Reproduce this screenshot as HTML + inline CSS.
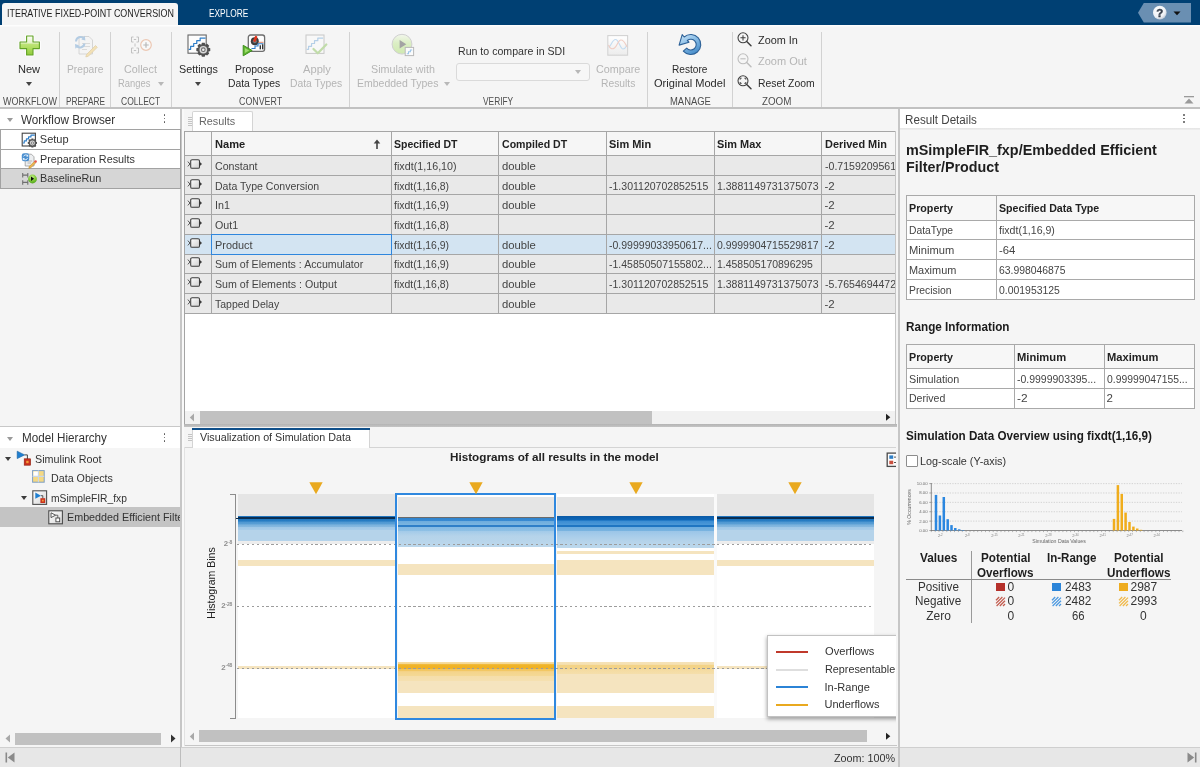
<!DOCTYPE html>
<html>
<head>
<meta charset="utf-8">
<title>Fixed-Point Tool</title>
<style>
*{box-sizing:border-box;margin:0;padding:0}
html,body{width:1200px;height:767px;overflow:hidden;background:#f5f5f5}
body{font-family:"Liberation Sans",sans-serif;font-size:12px;color:#333;position:relative}
.a{position:absolute}
.t{position:absolute;white-space:nowrap;transform-origin:0 50%}
.caret{position:absolute;width:0;height:0;border-left:3.5px solid transparent;border-right:3.5px solid transparent;border-top:4px solid #444}
.caret.d{border-top-color:#b8b8b8}
svg{position:absolute;overflow:visible}
#root{position:absolute;left:0;top:0;width:1200px;height:767px;overflow:hidden;will-change:transform;background:#f5f5f5}

</style>
</head>
<body>
<div id="root">
<div class="a" style="left:0px;top:0px;width:1200px;height:25px;background:#004073;"></div>
<div class="a" style="left:2px;top:3px;width:176px;height:23px;background:#f5f5f5;border-radius:3px 3px 0 0"></div>
<span class="t" style="left:6.5px;top:6px;font-size:10.5px;line-height:14px;color:#1f1f1f;transform:scaleX(0.851);">ITERATIVE FIXED-POINT CONVERSION</span>
<span class="t" style="left:208.5px;top:6px;font-size:10.5px;line-height:14px;color:#fff;transform:scaleX(0.794);">EXPLORE</span>
<svg style="left:1136px;top:2px" width="58" height="22" viewBox="1136 2 58 22"><polygon points="1138,12.7 1143.8,3 1191,3 1191,22.6 1143.8,22.6" fill="#6a8fb2"/><defs><radialGradient id="hg" cx="0.4" cy="0.35" r="0.7"><stop offset="0" stop-color="#fff"/><stop offset="0.7" stop-color="#eef1f5"/><stop offset="1" stop-color="#b9c4d2"/></radialGradient></defs><circle cx="1159.8" cy="12.6" r="6.8" fill="url(#hg)"/><text x="1159.8" y="16.7" font-family="Liberation Sans, sans-serif" font-weight="bold" font-size="11.5" text-anchor="middle" fill="#39424f" stroke="#39424f" stroke-width="0.4">?</text><polygon points="1173.5,11.5 1180.5,11.5 1177,15.3" fill="#111"/></svg>
<div class="a" style="left:0px;top:25px;width:1200px;height:82px;background:#f5f5f5;"></div>
<div class="a" style="left:0px;top:25px;width:1200px;height:1.3px;background:#fdfdfd;"></div>
<div class="a" style="left:0px;top:26.3px;width:1200px;height:0.8px;background:#f9f9f9;"></div>
<div class="a" style="left:59px;top:32px;width:1px;height:75px;background:#d2d2d2;"></div>
<div class="a" style="left:110px;top:32px;width:1px;height:75px;background:#d2d2d2;"></div>
<div class="a" style="left:171px;top:32px;width:1px;height:75px;background:#d2d2d2;"></div>
<div class="a" style="left:349px;top:32px;width:1px;height:75px;background:#d2d2d2;"></div>
<div class="a" style="left:647px;top:32px;width:1px;height:75px;background:#d2d2d2;"></div>
<div class="a" style="left:732px;top:32px;width:1px;height:75px;background:#d2d2d2;"></div>
<div class="a" style="left:821px;top:32px;width:1px;height:75px;background:#d2d2d2;"></div>
<span class="t" style="left:2.5px;top:95px;font-size:10px;line-height:13px;color:#4d4d4d;transform:scaleX(0.898);">WORKFLOW</span>
<span class="t" style="left:65.5px;top:95px;font-size:10px;line-height:13px;color:#4d4d4d;transform:scaleX(0.827);">PREPARE</span>
<span class="t" style="left:121.2px;top:95px;font-size:10px;line-height:13px;color:#4d4d4d;transform:scaleX(0.850);">COLLECT</span>
<span class="t" style="left:239.0px;top:95px;font-size:10px;line-height:13px;color:#4d4d4d;transform:scaleX(0.885);">CONVERT</span>
<span class="t" style="left:483.2px;top:95px;font-size:10px;line-height:13px;color:#4d4d4d;transform:scaleX(0.836);">VERIFY</span>
<span class="t" style="left:669.5px;top:95px;font-size:10px;line-height:13px;color:#4d4d4d;transform:scaleX(0.944);">MANAGE</span>
<span class="t" style="left:762.0px;top:95px;font-size:10px;line-height:13px;color:#4d4d4d;transform:scaleX(0.980);">ZOOM</span>
<span class="t" style="left:18.3px;top:62px;font-size:11.5px;line-height:15px;color:#2b2b2b;transform:scaleX(0.960);">New</span>
<div class="caret" style="left:26px;top:81.5px"></div>
<span class="t" style="left:67.0px;top:62px;font-size:11.5px;line-height:15px;color:#b5b5b5;transform:scaleX(0.889);">Prepare</span>
<span class="t" style="left:124.2px;top:62px;font-size:11.5px;line-height:15px;color:#b5b5b5;transform:scaleX(0.936);">Collect</span>
<span class="t" style="left:118.0px;top:76px;font-size:11.5px;line-height:15px;color:#b5b5b5;transform:scaleX(0.817);">Ranges</span>
<div class="caret d" style="left:158px;top:81.5px"></div>
<span class="t" style="left:178.5px;top:62px;font-size:11.5px;line-height:15px;color:#2b2b2b;transform:scaleX(0.936);">Settings</span>
<div class="caret" style="left:194.5px;top:81.5px"></div>
<span class="t" style="left:234.5px;top:62px;font-size:11.5px;line-height:15px;color:#2b2b2b;transform:scaleX(0.908);">Propose</span>
<span class="t" style="left:228.2px;top:76px;font-size:11.5px;line-height:15px;color:#2b2b2b;transform:scaleX(0.900);">Data Types</span>
<span class="t" style="left:302.5px;top:62px;font-size:11.5px;line-height:15px;color:#b5b5b5;transform:scaleX(0.969);">Apply</span>
<span class="t" style="left:290.2px;top:76px;font-size:11.5px;line-height:15px;color:#b5b5b5;transform:scaleX(0.900);">Data Types</span>
<span class="t" style="left:370.5px;top:62px;font-size:11.5px;line-height:15px;color:#b5b5b5;transform:scaleX(0.934);">Simulate with</span>
<span class="t" style="left:357.0px;top:76px;font-size:11.5px;line-height:15px;color:#b5b5b5;transform:scaleX(0.912);">Embedded Types</span>
<div class="caret d" style="left:443.5px;top:81.5px"></div>
<span class="t" style="left:458.2px;top:44px;font-size:11.5px;line-height:15px;color:#333;transform:scaleX(0.921);">Run to compare in SDI</span>
<div class="a" style="left:456px;top:62.5px;width:134px;height:18.5px;background:#f7f7f7;border:1px solid #dadada;border-radius:3px"></div>
<div class="caret d" style="left:574.5px;top:69.5px"></div>
<span class="t" style="left:595.5px;top:62px;font-size:11.5px;line-height:15px;color:#b5b5b5;transform:scaleX(0.938);">Compare</span>
<span class="t" style="left:600.5px;top:76px;font-size:11.5px;line-height:15px;color:#b5b5b5;transform:scaleX(0.897);">Results</span>
<span class="t" style="left:672.0px;top:62px;font-size:11.5px;line-height:15px;color:#2b2b2b;transform:scaleX(0.879);">Restore</span>
<span class="t" style="left:654.0px;top:76px;font-size:11.5px;line-height:15px;color:#2b2b2b;transform:scaleX(0.963);">Original Model</span>
<span class="t" style="left:757.5px;top:33px;font-size:11.5px;line-height:15px;color:#2b2b2b;transform:scaleX(0.946);">Zoom In</span>
<span class="t" style="left:757.5px;top:54px;font-size:11.5px;line-height:15px;color:#b5b5b5;transform:scaleX(0.956);">Zoom Out</span>
<span class="t" style="left:757.5px;top:76px;font-size:11.5px;line-height:15px;color:#2b2b2b;transform:scaleX(0.904);">Reset Zoom</span>
<svg style="left:1183px;top:95px" width="12" height="10" viewBox="0 0 12 10"><rect x="1" y="1" width="10" height="1.3" fill="#9a9a9a"/><polygon points="6,3.5 10.5,8.5 1.5,8.5" fill="#9a9a9a"/></svg>
<div class="a" style="left:0px;top:108px;width:180px;height:21px;background:#fff;"></div>
<div class="caret" style="left:7px;top:118px;border-top-color:#9a9a9a"></div>
<span class="t" style="left:21.2px;top:112px;font-size:12px;line-height:16px;color:#333;transform:scaleX(0.976);">Workflow Browser</span>
<div class="a" style="left:163.6px;top:114.2px;width:1.7px;height:1.7px;background:#555;border-radius:1px"></div>
<div class="a" style="left:163.6px;top:117.7px;width:1.7px;height:1.7px;background:#555;border-radius:1px"></div>
<div class="a" style="left:163.6px;top:121.2px;width:1.7px;height:1.7px;background:#555;border-radius:1px"></div>
<div class="a" style="left:180.2px;top:108px;width:1.5px;height:659px;background:#c6c6c6;"></div>
<div class="a" style="left:181.7px;top:108px;width:2.1px;height:639px;background:#f9f9f9;"></div>
<div class="a" style="left:0px;top:128.7px;width:181.3px;height:60.2px;background:#a2a2a2;"></div>
<div class="a" style="left:1px;top:130px;width:179px;height:18.6px;background:#fff;"></div>
<div class="a" style="left:1px;top:149.8px;width:179px;height:18.4px;background:#fff;"></div>
<div class="a" style="left:1px;top:169.4px;width:179px;height:18.4px;background:#d6d6d6;"></div>
<span class="t" style="left:39.8px;top:132px;font-size:11px;line-height:14px;color:#333;">Setup</span>
<span class="t" style="left:39.8px;top:152px;font-size:11px;line-height:14px;color:#333;transform:scaleX(0.982);">Preparation Results</span>
<span class="t" style="left:39.8px;top:171px;font-size:11px;line-height:14px;color:#333;transform:scaleX(0.984);">BaselineRun</span>
<div class="a" style="left:0px;top:425.8px;width:180px;height:1.7px;background:#c8c8c8;"></div>
<div class="a" style="left:0px;top:427px;width:180px;height:21px;background:#fff;"></div>
<div class="caret" style="left:7px;top:436.5px;border-top-color:#9a9a9a"></div>
<span class="t" style="left:21.5px;top:430px;font-size:12px;line-height:16px;color:#333;transform:scaleX(0.972);">Model Hierarchy</span>
<div class="a" style="left:163.6px;top:433.0px;width:1.7px;height:1.7px;background:#555;border-radius:1px"></div>
<div class="a" style="left:163.6px;top:436.5px;width:1.7px;height:1.7px;background:#555;border-radius:1px"></div>
<div class="a" style="left:163.6px;top:440.0px;width:1.7px;height:1.7px;background:#555;border-radius:1px"></div>
<div class="a" style="left:0px;top:507px;width:180px;height:19.7px;background:#c4c4c4;"></div>
<div class="caret" style="left:5px;top:456.5px;border-top-color:#3c3c3c"></div>
<div class="caret" style="left:20.5px;top:495.5px;border-top-color:#3c3c3c"></div>
<span class="t" style="left:34.5px;top:452px;font-size:11.5px;line-height:15px;color:#333;transform:scaleX(0.936);">Simulink Root</span>
<span class="t" style="left:50.5px;top:471px;font-size:11.5px;line-height:15px;color:#333;transform:scaleX(0.931);">Data Objects</span>
<span class="t" style="left:50.5px;top:491px;font-size:11.5px;line-height:15px;color:#333;transform:scaleX(0.893);">mSimpleFIR_fxp</span>
<div class="a" style="left:67px;top:507px;width:113px;height:20px;overflow:hidden"><span class="t" style="left:-0.5px;top:3px;font-size:11.5px;line-height:15px;color:#333;transform:scaleX(0.935);">Embedded Efficient Filter</span></div>
<div class="a" style="left:15px;top:732.5px;width:146px;height:12px;background:#c1c1c1;"></div>
<svg style="left:5px;top:734px" width="6" height="9" viewBox="0 0 6 9"><polygon points="5,0.5 5,8.5 0.5,4.5" fill="#a8a8a8"/></svg>
<svg style="left:170px;top:734px" width="6" height="9" viewBox="0 0 6 9"><polygon points="1,0.5 1,8.5 5.5,4.5" fill="#333"/></svg>
<div class="a" style="left:0px;top:747px;width:1200px;height:20px;background:#e7e7e7;"></div>
<div class="a" style="left:0px;top:746.5px;width:1200px;height:1px;background:#cfcfcf;"></div>
<div class="a" style="left:180px;top:747px;width:1px;height:20px;background:#bdbdbd;"></div>
<svg style="left:5px;top:752px" width="10" height="11" viewBox="0 0 10 11"><rect x="0.5" y="0.5" width="1.6" height="10" fill="#8a8a8a"/><polygon points="9.5,0.5 9.5,10.5 2.8,5.5" fill="#8a8a8a"/></svg>
<svg style="left:1186.5px;top:752px" width="10" height="11" viewBox="0 0 10 11"><rect x="7.9" y="0.5" width="1.6" height="10" fill="#8a8a8a"/><polygon points="0.5,0.5 0.5,10.5 7.2,5.5" fill="#8a8a8a"/></svg>
<span class="t" style="left:834.2px;top:751px;font-size:11.5px;line-height:15px;color:#333;transform:scaleX(0.939);">Zoom: 100%</span>
<div class="a" style="left:185px;top:108px;width:711px;height:317px;background:#f5f5f5;"></div>
<div class="a" style="left:185px;top:131px;width:711px;height:294px;background:#fff;"></div>
<div class="a" style="left:183.7px;top:131px;width:1.3px;height:294px;background:#a4a4a4;"></div>
<div class="a" style="left:184px;top:424.3px;width:712.5px;height:3px;background:linear-gradient(#b4b4b4,#c4c4c4);"></div>
<div class="a" style="left:192px;top:111px;width:61px;height:21px;background:#fff;border:1px solid #d4d4d4;border-bottom:0;border-radius:2px 2px 0 0"></div>
<span class="t" style="left:199.3px;top:114px;font-size:11px;line-height:14px;color:#666;transform:scaleX(0.984);">Results</span>
<div class="a" style="left:188.3px;top:117px;width:3.4px;height:1px;background:#c4c4c4;"></div>
<div class="a" style="left:188.3px;top:119px;width:3.4px;height:1px;background:#c4c4c4;"></div>
<div class="a" style="left:188.3px;top:121px;width:3.4px;height:1px;background:#c4c4c4;"></div>
<div class="a" style="left:188.3px;top:123px;width:3.4px;height:1px;background:#c4c4c4;"></div>
<div class="a" style="left:188.3px;top:125px;width:3.4px;height:1px;background:#c4c4c4;"></div>
<div class="a" style="left:185px;top:131px;width:711px;height:183px;background:#a6a6a6;"></div>
<div class="a" style="left:185px;top:132px;width:26px;height:23px;background:#f6f6f6;"></div>
<div class="a" style="left:212px;top:132px;width:179px;height:23px;background:#f6f6f6;"></div>
<div class="a" style="left:392px;top:132px;width:106px;height:23px;background:#f6f6f6;"></div>
<div class="a" style="left:499px;top:132px;width:107px;height:23px;background:#f6f6f6;"></div>
<div class="a" style="left:607px;top:132px;width:107px;height:23px;background:#f6f6f6;"></div>
<div class="a" style="left:715px;top:132px;width:106px;height:23px;background:#f6f6f6;"></div>
<div class="a" style="left:822px;top:132px;width:74px;height:23px;background:#f6f6f6;"></div>
<div class="a" style="left:185px;top:156px;width:26px;height:19px;background:#e9e9e9;"></div>
<div class="a" style="left:212px;top:156px;width:179px;height:19px;background:#e9e9e9;"></div>
<div class="a" style="left:392px;top:156px;width:106px;height:19px;background:#e9e9e9;"></div>
<div class="a" style="left:499px;top:156px;width:107px;height:19px;background:#e9e9e9;"></div>
<div class="a" style="left:607px;top:156px;width:107px;height:19px;background:#e9e9e9;"></div>
<div class="a" style="left:715px;top:156px;width:106px;height:19px;background:#e9e9e9;"></div>
<div class="a" style="left:822px;top:156px;width:74px;height:19px;background:#e9e9e9;"></div>
<div class="a" style="left:185px;top:176px;width:26px;height:18px;background:#e9e9e9;"></div>
<div class="a" style="left:212px;top:176px;width:179px;height:18px;background:#e9e9e9;"></div>
<div class="a" style="left:392px;top:176px;width:106px;height:18px;background:#e9e9e9;"></div>
<div class="a" style="left:499px;top:176px;width:107px;height:18px;background:#e9e9e9;"></div>
<div class="a" style="left:607px;top:176px;width:107px;height:18px;background:#e9e9e9;"></div>
<div class="a" style="left:715px;top:176px;width:106px;height:18px;background:#e9e9e9;"></div>
<div class="a" style="left:822px;top:176px;width:74px;height:18px;background:#e9e9e9;"></div>
<div class="a" style="left:185px;top:195px;width:26px;height:19px;background:#e9e9e9;"></div>
<div class="a" style="left:212px;top:195px;width:179px;height:19px;background:#e9e9e9;"></div>
<div class="a" style="left:392px;top:195px;width:106px;height:19px;background:#e9e9e9;"></div>
<div class="a" style="left:499px;top:195px;width:107px;height:19px;background:#e9e9e9;"></div>
<div class="a" style="left:607px;top:195px;width:107px;height:19px;background:#e9e9e9;"></div>
<div class="a" style="left:715px;top:195px;width:106px;height:19px;background:#e9e9e9;"></div>
<div class="a" style="left:822px;top:195px;width:74px;height:19px;background:#e9e9e9;"></div>
<div class="a" style="left:185px;top:215px;width:26px;height:19px;background:#e9e9e9;"></div>
<div class="a" style="left:212px;top:215px;width:179px;height:19px;background:#e9e9e9;"></div>
<div class="a" style="left:392px;top:215px;width:106px;height:19px;background:#e9e9e9;"></div>
<div class="a" style="left:499px;top:215px;width:107px;height:19px;background:#e9e9e9;"></div>
<div class="a" style="left:607px;top:215px;width:107px;height:19px;background:#e9e9e9;"></div>
<div class="a" style="left:715px;top:215px;width:106px;height:19px;background:#e9e9e9;"></div>
<div class="a" style="left:822px;top:215px;width:74px;height:19px;background:#e9e9e9;"></div>
<div class="a" style="left:185px;top:235px;width:26px;height:19px;background:#d3e4f2;"></div>
<div class="a" style="left:212px;top:235px;width:179px;height:19px;background:#d3e4f2;"></div>
<div class="a" style="left:392px;top:235px;width:106px;height:19px;background:#d3e4f2;"></div>
<div class="a" style="left:499px;top:235px;width:107px;height:19px;background:#d3e4f2;"></div>
<div class="a" style="left:607px;top:235px;width:107px;height:19px;background:#d3e4f2;"></div>
<div class="a" style="left:715px;top:235px;width:106px;height:19px;background:#d3e4f2;"></div>
<div class="a" style="left:822px;top:235px;width:74px;height:19px;background:#d3e4f2;"></div>
<div class="a" style="left:185px;top:255px;width:26px;height:18px;background:#e9e9e9;"></div>
<div class="a" style="left:212px;top:255px;width:179px;height:18px;background:#e9e9e9;"></div>
<div class="a" style="left:392px;top:255px;width:106px;height:18px;background:#e9e9e9;"></div>
<div class="a" style="left:499px;top:255px;width:107px;height:18px;background:#e9e9e9;"></div>
<div class="a" style="left:607px;top:255px;width:107px;height:18px;background:#e9e9e9;"></div>
<div class="a" style="left:715px;top:255px;width:106px;height:18px;background:#e9e9e9;"></div>
<div class="a" style="left:822px;top:255px;width:74px;height:18px;background:#e9e9e9;"></div>
<div class="a" style="left:185px;top:274px;width:26px;height:19px;background:#e9e9e9;"></div>
<div class="a" style="left:212px;top:274px;width:179px;height:19px;background:#e9e9e9;"></div>
<div class="a" style="left:392px;top:274px;width:106px;height:19px;background:#e9e9e9;"></div>
<div class="a" style="left:499px;top:274px;width:107px;height:19px;background:#e9e9e9;"></div>
<div class="a" style="left:607px;top:274px;width:107px;height:19px;background:#e9e9e9;"></div>
<div class="a" style="left:715px;top:274px;width:106px;height:19px;background:#e9e9e9;"></div>
<div class="a" style="left:822px;top:274px;width:74px;height:19px;background:#e9e9e9;"></div>
<div class="a" style="left:185px;top:294px;width:26px;height:19px;background:#e9e9e9;"></div>
<div class="a" style="left:212px;top:294px;width:179px;height:19px;background:#e9e9e9;"></div>
<div class="a" style="left:392px;top:294px;width:106px;height:19px;background:#e9e9e9;"></div>
<div class="a" style="left:499px;top:294px;width:107px;height:19px;background:#e9e9e9;"></div>
<div class="a" style="left:607px;top:294px;width:107px;height:19px;background:#e9e9e9;"></div>
<div class="a" style="left:715px;top:294px;width:106px;height:19px;background:#e9e9e9;"></div>
<div class="a" style="left:822px;top:294px;width:74px;height:19px;background:#e9e9e9;"></div>
<div class="a" style="left:211px;top:233.6px;width:181.4px;height:21.8px;background:#d3e4f2;border:1.8px solid #2f86dd"></div>
<span class="t" style="left:214.5px;top:137px;font-size:11.5px;line-height:15px;color:#222;font-weight:700;transform:scaleX(0.964);">Name</span>
<span class="t" style="left:394.1px;top:137px;font-size:11.5px;line-height:15px;color:#222;font-weight:700;transform:scaleX(0.912);">Specified DT</span>
<span class="t" style="left:501.5px;top:137px;font-size:11.5px;line-height:15px;color:#222;font-weight:700;transform:scaleX(0.919);">Compiled DT</span>
<span class="t" style="left:609.1px;top:137px;font-size:11.5px;line-height:15px;color:#222;font-weight:700;transform:scaleX(0.955);">Sim Min</span>
<span class="t" style="left:716.5px;top:137px;font-size:11.5px;line-height:15px;color:#222;font-weight:700;transform:scaleX(0.949);">Sim Max</span>
<span class="t" style="left:824.5px;top:137px;font-size:11.5px;line-height:15px;color:#222;font-weight:700;transform:scaleX(0.950);">Derived Min</span>
<svg style="left:372.5px;top:139px" width="8" height="11" viewBox="0 0 8 11"><path d="M4 0.6 L7.3 4.6 H4.8 V10 H3.2 V4.6 H0.7 Z" fill="#444"/></svg>
<span class="t" style="left:214.5px;top:159px;font-size:11.5px;line-height:15px;color:#444;transform:scaleX(0.925);">Constant</span>
<span class="t" style="left:394.1px;top:159px;font-size:11.5px;line-height:15px;color:#444;transform:scaleX(0.933);">fixdt(1,16,10)</span>
<span class="t" style="left:501.5px;top:159px;font-size:11.5px;line-height:15px;color:#444;transform:scaleX(0.981);">double</span>
<div class="a" style="left:825px;top:157.3px;width:70.5px;height:18px;overflow:hidden"><span class="t" style="left:-0.5px;top:2px;font-size:11.5px;line-height:15px;color:#444;transform:scaleX(0.919);">-0.7159209561</span></div>
<svg style="left:187px;top:158.2px" width="16" height="12" viewBox="0 0 16 12"><defs><linearGradient id="bg0" x1="0" y1="0" x2="1" y2="1"><stop offset="0" stop-color="#fff"/><stop offset="1" stop-color="#cfcfcf"/></linearGradient></defs><rect x="3.7" y="1.7" width="8.8" height="8.6" rx="1.4" fill="url(#bg0)" stroke="#3c3c3c" stroke-width="1.05"/><path d="M0.9 3.6 L2.9 6 L0.9 8.4" fill="none" stroke="#444" stroke-width="0.9"/><polygon points="12.9,3.9 15,6 12.9,8.1" fill="#3c3c3c"/></svg>
<span class="t" style="left:214.5px;top:179px;font-size:11.5px;line-height:15px;color:#444;transform:scaleX(0.917);">Data Type Conversion</span>
<span class="t" style="left:394.1px;top:179px;font-size:11.5px;line-height:15px;color:#444;transform:scaleX(0.907);">fixdt(1,16,8)</span>
<span class="t" style="left:501.5px;top:179px;font-size:11.5px;line-height:15px;color:#444;transform:scaleX(0.981);">double</span>
<span class="t" style="left:609.1px;top:179px;font-size:11.5px;line-height:15px;color:#444;transform:scaleX(0.915);">-1.301120702852515</span>
<span class="t" style="left:716.5px;top:179px;font-size:11.5px;line-height:15px;color:#444;transform:scaleX(0.914);">1.3881149731375073</span>
<span class="t" style="left:824.5px;top:179px;font-size:11.5px;line-height:15px;color:#444;">-2</span>
<svg style="left:187px;top:177.8px" width="16" height="12" viewBox="0 0 16 12"><defs><linearGradient id="bg1" x1="0" y1="0" x2="1" y2="1"><stop offset="0" stop-color="#fff"/><stop offset="1" stop-color="#cfcfcf"/></linearGradient></defs><rect x="3.7" y="1.7" width="8.8" height="8.6" rx="1.4" fill="url(#bg1)" stroke="#3c3c3c" stroke-width="1.05"/><path d="M0.9 3.6 L2.9 6 L0.9 8.4" fill="none" stroke="#444" stroke-width="0.9"/><polygon points="12.9,3.9 15,6 12.9,8.1" fill="#3c3c3c"/></svg>
<span class="t" style="left:214.5px;top:198px;font-size:11.5px;line-height:15px;color:#444;transform:scaleX(0.931);">In1</span>
<span class="t" style="left:394.1px;top:198px;font-size:11.5px;line-height:15px;color:#444;transform:scaleX(0.907);">fixdt(1,16,9)</span>
<span class="t" style="left:501.5px;top:198px;font-size:11.5px;line-height:15px;color:#444;transform:scaleX(0.981);">double</span>
<span class="t" style="left:824.5px;top:198px;font-size:11.5px;line-height:15px;color:#444;">-2</span>
<svg style="left:187px;top:197.3px" width="16" height="12" viewBox="0 0 16 12"><defs><linearGradient id="bg2" x1="0" y1="0" x2="1" y2="1"><stop offset="0" stop-color="#fff"/><stop offset="1" stop-color="#cfcfcf"/></linearGradient></defs><rect x="3.7" y="1.7" width="8.8" height="8.6" rx="1.4" fill="url(#bg2)" stroke="#3c3c3c" stroke-width="1.05"/><path d="M0.9 3.6 L2.9 6 L0.9 8.4" fill="none" stroke="#444" stroke-width="0.9"/><polygon points="12.9,3.9 15,6 12.9,8.1" fill="#3c3c3c"/></svg>
<span class="t" style="left:214.5px;top:218px;font-size:11.5px;line-height:15px;color:#444;transform:scaleX(0.930);">Out1</span>
<span class="t" style="left:394.1px;top:218px;font-size:11.5px;line-height:15px;color:#444;transform:scaleX(0.907);">fixdt(1,16,8)</span>
<span class="t" style="left:824.5px;top:218px;font-size:11.5px;line-height:15px;color:#444;">-2</span>
<svg style="left:187px;top:216.9px" width="16" height="12" viewBox="0 0 16 12"><defs><linearGradient id="bg3" x1="0" y1="0" x2="1" y2="1"><stop offset="0" stop-color="#fff"/><stop offset="1" stop-color="#cfcfcf"/></linearGradient></defs><rect x="3.7" y="1.7" width="8.8" height="8.6" rx="1.4" fill="url(#bg3)" stroke="#3c3c3c" stroke-width="1.05"/><path d="M0.9 3.6 L2.9 6 L0.9 8.4" fill="none" stroke="#444" stroke-width="0.9"/><polygon points="12.9,3.9 15,6 12.9,8.1" fill="#3c3c3c"/></svg>
<span class="t" style="left:214.5px;top:238px;font-size:11.5px;line-height:15px;color:#444;transform:scaleX(0.949);">Product</span>
<span class="t" style="left:394.1px;top:238px;font-size:11.5px;line-height:15px;color:#444;transform:scaleX(0.907);">fixdt(1,16,9)</span>
<span class="t" style="left:501.5px;top:238px;font-size:11.5px;line-height:15px;color:#444;transform:scaleX(0.981);">double</span>
<span class="t" style="left:609.1px;top:238px;font-size:11.5px;line-height:15px;color:#444;transform:scaleX(0.914);">-0.99999033950617...</span>
<span class="t" style="left:716.5px;top:238px;font-size:11.5px;line-height:15px;color:#444;transform:scaleX(0.907);">0.9999904715529817</span>
<span class="t" style="left:824.5px;top:238px;font-size:11.5px;line-height:15px;color:#444;">-2</span>
<svg style="left:187px;top:236.5px" width="16" height="12" viewBox="0 0 16 12"><defs><linearGradient id="bg4" x1="0" y1="0" x2="1" y2="1"><stop offset="0" stop-color="#fff"/><stop offset="1" stop-color="#cfcfcf"/></linearGradient></defs><rect x="3.7" y="1.7" width="8.8" height="8.6" rx="1.4" fill="url(#bg4)" stroke="#3c3c3c" stroke-width="1.05"/><path d="M0.9 3.6 L2.9 6 L0.9 8.4" fill="none" stroke="#444" stroke-width="0.9"/><polygon points="12.9,3.9 15,6 12.9,8.1" fill="#3c3c3c"/></svg>
<span class="t" style="left:214.5px;top:257px;font-size:11.5px;line-height:15px;color:#444;transform:scaleX(0.924);">Sum of Elements : Accumulator</span>
<span class="t" style="left:394.1px;top:257px;font-size:11.5px;line-height:15px;color:#444;transform:scaleX(0.907);">fixdt(1,16,9)</span>
<span class="t" style="left:501.5px;top:257px;font-size:11.5px;line-height:15px;color:#444;transform:scaleX(0.981);">double</span>
<span class="t" style="left:609.1px;top:257px;font-size:11.5px;line-height:15px;color:#444;transform:scaleX(0.914);">-1.45850507155802...</span>
<span class="t" style="left:716.5px;top:257px;font-size:11.5px;line-height:15px;color:#444;transform:scaleX(0.909);">1.458505170896295</span>
<svg style="left:187px;top:256.0px" width="16" height="12" viewBox="0 0 16 12"><defs><linearGradient id="bg5" x1="0" y1="0" x2="1" y2="1"><stop offset="0" stop-color="#fff"/><stop offset="1" stop-color="#cfcfcf"/></linearGradient></defs><rect x="3.7" y="1.7" width="8.8" height="8.6" rx="1.4" fill="url(#bg5)" stroke="#3c3c3c" stroke-width="1.05"/><path d="M0.9 3.6 L2.9 6 L0.9 8.4" fill="none" stroke="#444" stroke-width="0.9"/><polygon points="12.9,3.9 15,6 12.9,8.1" fill="#3c3c3c"/></svg>
<span class="t" style="left:214.5px;top:277px;font-size:11.5px;line-height:15px;color:#444;transform:scaleX(0.926);">Sum of Elements : Output</span>
<span class="t" style="left:394.1px;top:277px;font-size:11.5px;line-height:15px;color:#444;transform:scaleX(0.907);">fixdt(1,16,8)</span>
<span class="t" style="left:501.5px;top:277px;font-size:11.5px;line-height:15px;color:#444;transform:scaleX(0.981);">double</span>
<span class="t" style="left:609.1px;top:277px;font-size:11.5px;line-height:15px;color:#444;transform:scaleX(0.915);">-1.301120702852515</span>
<span class="t" style="left:716.5px;top:277px;font-size:11.5px;line-height:15px;color:#444;transform:scaleX(0.914);">1.3881149731375073</span>
<div class="a" style="left:825px;top:274.9px;width:70.5px;height:18px;overflow:hidden"><span class="t" style="left:-0.5px;top:2px;font-size:11.5px;line-height:15px;color:#444;transform:scaleX(0.919);">-5.7654694472</span></div>
<svg style="left:187px;top:275.8px" width="16" height="12" viewBox="0 0 16 12"><defs><linearGradient id="bg6" x1="0" y1="0" x2="1" y2="1"><stop offset="0" stop-color="#fff"/><stop offset="1" stop-color="#cfcfcf"/></linearGradient></defs><rect x="3.7" y="1.7" width="8.8" height="8.6" rx="1.4" fill="url(#bg6)" stroke="#3c3c3c" stroke-width="1.05"/><path d="M0.9 3.6 L2.9 6 L0.9 8.4" fill="none" stroke="#444" stroke-width="0.9"/><polygon points="12.9,3.9 15,6 12.9,8.1" fill="#3c3c3c"/></svg>
<span class="t" style="left:214.5px;top:297px;font-size:11.5px;line-height:15px;color:#444;transform:scaleX(0.913);">Tapped Delay</span>
<span class="t" style="left:501.5px;top:297px;font-size:11.5px;line-height:15px;color:#444;transform:scaleX(0.981);">double</span>
<span class="t" style="left:824.5px;top:297px;font-size:11.5px;line-height:15px;color:#444;">-2</span>
<svg style="left:187px;top:295.9px" width="16" height="12" viewBox="0 0 16 12"><defs><linearGradient id="bg7" x1="0" y1="0" x2="1" y2="1"><stop offset="0" stop-color="#fff"/><stop offset="1" stop-color="#cfcfcf"/></linearGradient></defs><rect x="3.7" y="1.7" width="8.8" height="8.6" rx="1.4" fill="url(#bg7)" stroke="#3c3c3c" stroke-width="1.05"/><path d="M0.9 3.6 L2.9 6 L0.9 8.4" fill="none" stroke="#444" stroke-width="0.9"/><polygon points="12.9,3.9 15,6 12.9,8.1" fill="#3c3c3c"/></svg>
<div class="a" style="left:185px;top:411px;width:711px;height:13px;background:#f1f1f1;"></div>
<div class="a" style="left:200px;top:411px;width:452px;height:12.5px;background:#c1c1c1;"></div>
<svg style="left:189px;top:413px" width="6" height="9" viewBox="0 0 6 9"><polygon points="5,0.5 5,8.5 0.8,4.5" fill="#a8a8a8"/></svg>
<svg style="left:885.4px;top:413.3px" width="6" height="9" viewBox="0 0 6 9"><polygon points="1,0.8 1,7.8 5.3,4.3" fill="#222"/></svg>
<div class="a" style="left:895.3px;top:131px;width:1.2px;height:294px;background:#c6c6c6;"></div>
<div class="a" style="left:184px;top:424.3px;width:712.5px;height:3px;background:linear-gradient(#b4b4b4,#c4c4c4);"></div>
<div class="a" style="left:185px;top:427px;width:711px;height:319px;background:#f5f5f5;"></div>
<div class="a" style="left:183.5px;top:447px;width:1.5px;height:299px;background:#e2e2e2;"></div>
<div class="a" style="left:185px;top:447px;width:711px;height:1px;background:#d4d4d4;"></div>
<div class="a" style="left:185px;top:744.5px;width:712px;height:1px;background:#c6c6c6;"></div>
<div class="a" style="left:192px;top:427.5px;width:177.5px;height:20.5px;background:#fff;border-right:1px solid #d4d4d4;border-left:1px solid #d4d4d4"></div>
<div class="a" style="left:192px;top:427.5px;width:177.5px;height:2px;background:#0f4f8a;"></div>
<div class="a" style="left:188.3px;top:434px;width:3.4px;height:1px;background:#c4c4c4;"></div>
<div class="a" style="left:188.3px;top:436px;width:3.4px;height:1px;background:#c4c4c4;"></div>
<div class="a" style="left:188.3px;top:438px;width:3.4px;height:1px;background:#c4c4c4;"></div>
<div class="a" style="left:188.3px;top:440px;width:3.4px;height:1px;background:#c4c4c4;"></div>
<span class="t" style="left:199.5px;top:430px;font-size:11px;line-height:14px;color:#333;transform:scaleX(0.977);">Visualization of Simulation Data</span>
<span class="t" style="left:449.5px;top:450px;font-size:11.5px;line-height:15px;color:#222;font-weight:700;transform:scaleX(1.018);">Histograms of all results in the model</span>
<div class="a" style="left:185px;top:448px;width:711px;height:296px;overflow:hidden">
<div class="a" style="left:52.6px;top:46.3px;width:157.0px;height:223.3px;background:#fff;"></div>
<div class="a" style="left:52.6px;top:46.3px;width:157.0px;height:22.0px;background:#e5e5e5;"></div>
<div class="a" style="left:52.6px;top:68.3px;width:157.0px;height:24.5px;background:linear-gradient(#2277c0 0,#1f74be 1px,#0a2e52 1.5px,#0a2e52 2.8px,#1f77c0 3.3px,#2a7ec4 5.3px,#4d96d1 5.8px,#5a9fd5 8.2px,#79b1dd 8.7px,#85b8e0 10.8px,#a0c8e8 11.3px,#a8cce9 13.8px,#b5d3ea 14.5px,#b5d3ea 100%);"></div>
<div class="a" style="left:52.6px;top:92.8px;width:157.0px;height:3.5px;background:#ededed;"></div>
<div class="a" style="left:52.6px;top:111.6px;width:157.0px;height:6.2px;background:#f5e4bf;"></div>
<div class="a" style="left:52.6px;top:217.6px;width:157.0px;height:3.2px;background:#f5e4bf;"></div>
<div class="a" style="left:50.4px;top:69.6px;width:2.4px;height:1.5px;background:#0a2e52;"></div>
<div class="a" style="left:212.5px;top:46.3px;width:156.5px;height:223.3px;background:#fff;"></div>
<div class="a" style="left:212.5px;top:49.2px;width:156.5px;height:20.3px;background:#e5e5e5;"></div>
<div class="a" style="left:212.5px;top:69.3px;width:156.5px;height:30.2px;background:linear-gradient(#6b6b6b 0,#6b6b6b 1.2px,#2f84cf 1.3px,#3a8bd2 4px,#6fadde 4.5px,#7ab4e0 7.5px,#2f7fc8 8px,#2f7fc8 10px,#86bbe4 10.5px,#8fc0e5 14px,#a4cbe9 14.5px,#b5d3ea 19px,#bcd8ec 100%);"></div>
<div class="a" style="left:212.5px;top:115.5px;width:156.5px;height:11.2px;background:#f5e4bf;"></div>
<div class="a" style="left:212.5px;top:214.3px;width:156.5px;height:30.9px;background:linear-gradient(#f6dea6 0,#f5d68f 2px,#f0b52b 2.6px,#efb021 6.4px,#f2c45c 7px,#f2c866 9px,#f4d48b 9.6px,#f4d894 13.5px,#f5deaa 14.2px,#f5e0b0 18.5px,#f5e4bf 19.2px,#f5e4bf 100%);"></div>
<div class="a" style="left:212.5px;top:258.2px;width:156.5px;height:11.4px;background:#f5e4bf;"></div>
<div class="a" style="left:371.6px;top:45.6px;width:157.3px;height:224.0px;background:#fff;"></div>
<div class="a" style="left:371.6px;top:49.0px;width:157.3px;height:19.4px;background:#e5e5e5;"></div>
<div class="a" style="left:371.6px;top:68.3px;width:157.3px;height:31.7px;background:linear-gradient(#0a5aa6 0,#0c66b8 4px,#3a8cd3 5px,#4a97d7 8.5px,#1f75c2 9px,#1f75c2 10.5px,#6dacdf 11px,#7ab4e0 15px,#9cc6e8 15.5px,#a8cdea 20px,#b5d3ea 25px,#bcd8ec 100%);"></div>
<div class="a" style="left:371.6px;top:102.8px;width:157.3px;height:3.0px;background:#f5e4bf;"></div>
<div class="a" style="left:371.6px;top:112.0px;width:157.3px;height:15.0px;background:#f5e4bf;"></div>
<div class="a" style="left:371.6px;top:214.3px;width:157.3px;height:30.9px;background:linear-gradient(#f5e2b8 0,#f5e0b2 2.4px,#f3d387 3px,#f3d387 7px,#f4dba0 7.6px,#f5deaa 11.5px,#f5e4bf 12.2px,#f5e4bf 100%);"></div>
<div class="a" style="left:371.6px;top:258.2px;width:157.3px;height:11.4px;background:#f5e4bf;"></div>
<div class="a" style="left:528.9px;top:45.6px;width:3.2px;height:224.0px;background:#fafafa;"></div>
<div class="a" style="left:532.1px;top:46.3px;width:156.5px;height:223.3px;background:#fff;"></div>
<div class="a" style="left:532.1px;top:46.3px;width:156.5px;height:22.0px;background:#e5e5e5;"></div>
<div class="a" style="left:532.1px;top:68.3px;width:156.5px;height:24.5px;background:linear-gradient(#2277c0 0,#1f74be 1px,#0a2e52 1.5px,#0a2e52 2.8px,#1f77c0 3.3px,#2a7ec4 5.3px,#4d96d1 5.8px,#5a9fd5 8.2px,#79b1dd 8.7px,#85b8e0 10.8px,#a0c8e8 11.3px,#a8cce9 13.8px,#b5d3ea 14.5px,#b5d3ea 100%);"></div>
<div class="a" style="left:532.1px;top:92.8px;width:156.5px;height:3.5px;background:#ededed;"></div>
<div class="a" style="left:532.1px;top:111.6px;width:156.5px;height:6.2px;background:#f5e4bf;"></div>
<div class="a" style="left:532.1px;top:217.6px;width:156.5px;height:3.2px;background:#f5e4bf;"></div>
<div class="a" style="left:51.5px;top:96.1px;width:637.0px;height:1.1px;background:repeating-linear-gradient(90deg,#9c9c9c 0,#9c9c9c 2.2px,transparent 2.2px,transparent 4.9px);"></div>
<div class="a" style="left:51.5px;top:158.2px;width:637.0px;height:1.1px;background:repeating-linear-gradient(90deg,#9c9c9c 0,#9c9c9c 2.2px,transparent 2.2px,transparent 4.9px);"></div>
<div class="a" style="left:51.5px;top:219.9px;width:637.0px;height:1.1px;background:repeating-linear-gradient(90deg,#9c9c9c 0,#9c9c9c 2.2px,transparent 2.2px,transparent 4.9px);"></div>
<div class="a" style="left:210.2px;top:44.8px;width:160.6px;height:226.8px;background:transparent;border:2px solid #2f88df"></div>
<div class="a" style="left:50.2px;top:46.2px;width:1.0px;height:224.6px;background:#8c8c8c;"></div>
<div class="a" style="left:44.8px;top:46.0px;width:6.0px;height:1.0px;background:#8c8c8c;"></div>
<div class="a" style="left:44.8px;top:270.0px;width:6.0px;height:1.0px;background:#8c8c8c;"></div>
<svg style="left:124.0px;top:33.8px" width="14" height="12.4" viewBox="0 0 14 12.4"><polygon points="0.3,0.2 13.7,0.2 7,12.2" fill="#e9a91f"/></svg>
<svg style="left:283.7px;top:33.8px" width="14" height="12.4" viewBox="0 0 14 12.4"><polygon points="0.3,0.2 13.7,0.2 7,12.2" fill="#e9a91f"/></svg>
<svg style="left:443.7px;top:33.8px" width="14" height="12.4" viewBox="0 0 14 12.4"><polygon points="0.3,0.2 13.7,0.2 7,12.2" fill="#e9a91f"/></svg>
<svg style="left:603.4px;top:33.8px" width="14" height="12.4" viewBox="0 0 14 12.4"><polygon points="0.3,0.2 13.7,0.2 7,12.2" fill="#e9a91f"/></svg>
<div class="a" style="left:581.5px;top:187.4px;width:140.0px;height:81.6px;background:#fff;border:1px solid #c2c2c2;box-shadow:0 2px 4px rgba(0,0,0,0.4)"></div>
</div>
<div class="a" style="left:776px;top:651.2px;width:32px;height:1.9px;background:#c0392b;"></div>
<span class="t" style="left:824.5px;top:644px;font-size:11px;line-height:14px;color:#333;transform:scaleX(1.010);">Overflows</span>
<div class="a" style="left:776px;top:669.2px;width:32px;height:1.9px;background:#dedede;"></div>
<div class="a" style="left:825px;top:660.2px;width:70.3px;height:18px;overflow:hidden"><span class="t" style="left:-0.5px;top:2px;font-size:11px;line-height:14px;color:#333;transform:scaleX(0.981);">Representable</span></div>
<div class="a" style="left:776px;top:686.2px;width:32px;height:1.9px;background:#2b83d6;"></div>
<span class="t" style="left:824.5px;top:680px;font-size:11px;line-height:14px;color:#333;">In-Range</span>
<div class="a" style="left:776px;top:704.2px;width:32px;height:1.9px;background:#e9a91f;"></div>
<span class="t" style="left:824.5px;top:697px;font-size:11px;line-height:14px;color:#333;">Underflows</span>
<div class="a" style="left:210.6px;top:582.9px;width:0;height:0"><div class="a" style="transform:translate(-50%,-50%) rotate(-90deg) scaleX(0.915);white-space:nowrap;font-size:11.5px;line-height:14px;color:#222;left:0;top:0">Histogram Bins</div></div>
<div class="t" style="right:967.8px;top:539.4px;font-size:7.8px;line-height:10px;color:#8e8e8e;font-weight:700">2<span style="font-size:5px;position:relative;top:-2.8px;letter-spacing:-0.2px">-8</span></div>
<div class="t" style="right:967.8px;top:601.3px;font-size:7.8px;line-height:10px;color:#8e8e8e;font-weight:700">2<span style="font-size:5px;position:relative;top:-2.8px;letter-spacing:-0.2px">-28</span></div>
<div class="t" style="right:967.8px;top:663.0px;font-size:7.8px;line-height:10px;color:#8e8e8e;font-weight:700">2<span style="font-size:5px;position:relative;top:-2.8px;letter-spacing:-0.2px">-48</span></div>
<div class="a" style="left:199.3px;top:730px;width:667.6px;height:12.2px;background:#c1c1c1;"></div>
<svg style="left:189px;top:732px" width="6" height="9" viewBox="0 0 6 9"><polygon points="5,0.5 5,8.5 0.8,4.5" fill="#a8a8a8"/></svg>
<svg style="left:885.4px;top:732px" width="6" height="9" viewBox="0 0 6 9"><polygon points="1,0.8 1,7.8 5.3,4.3" fill="#222"/></svg>
<svg style="left:886px;top:452px;overflow:hidden" width="10" height="16" viewBox="886 452 10 16"><rect x="887.2" y="453.1" width="12" height="13.3" fill="#fcfcfc" stroke="#4a4a4a" stroke-width="1.3"/><rect x="889.3" y="455.4" width="3.9" height="3.4" fill="#2f7fc6"/><rect x="889.3" y="460.7" width="3.9" height="3.5" fill="#c9503f"/><rect x="894" y="456.6" width="2" height="1" fill="#555"/><rect x="894" y="462" width="2" height="1" fill="#555"/></svg>
<div class="a" style="left:898.1px;top:108px;width:1.8px;height:659px;background:#c6c6c6;"></div>
<div class="a" style="left:900px;top:108px;width:300px;height:20px;background:#fff;"></div>
<div class="a" style="left:900px;top:128px;width:300px;height:2.2px;background:linear-gradient(#e4e4e4,#efefef);"></div>
<span class="t" style="left:905.2px;top:112px;font-size:12px;line-height:16px;color:#444;transform:scaleX(0.970);">Result Details</span>
<div class="a" style="left:1183.3px;top:114.2px;width:1.7px;height:1.7px;background:#555;border-radius:1px"></div>
<div class="a" style="left:1183.3px;top:117.7px;width:1.7px;height:1.7px;background:#555;border-radius:1px"></div>
<div class="a" style="left:1183.3px;top:121.2px;width:1.7px;height:1.7px;background:#555;border-radius:1px"></div>
<span class="t" style="left:905.5px;top:141px;font-size:14px;line-height:18px;color:#1e1e1e;font-weight:700;transform:scaleX(1.027);">mSimpleFIR_fxp/Embedded Efficient</span>
<span class="t" style="left:905.5px;top:158px;font-size:14px;line-height:18px;color:#1e1e1e;font-weight:700;transform:scaleX(1.021);">Filter/Product</span>
<div class="a" style="left:906px;top:195px;width:289px;height:105px;background:#a9a9a9;"></div>
<div class="a" style="left:907px;top:196px;width:89px;height:24px;background:#f7f7f7;"></div>
<div class="a" style="left:997px;top:196px;width:197px;height:24px;background:#f7f7f7;"></div>
<div class="a" style="left:907px;top:221px;width:89px;height:18px;background:#fff;"></div>
<div class="a" style="left:997px;top:221px;width:197px;height:18px;background:#fff;"></div>
<div class="a" style="left:907px;top:240px;width:89px;height:19px;background:#fff;"></div>
<div class="a" style="left:997px;top:240px;width:197px;height:19px;background:#fff;"></div>
<div class="a" style="left:907px;top:260px;width:89px;height:19px;background:#fff;"></div>
<div class="a" style="left:997px;top:260px;width:197px;height:19px;background:#fff;"></div>
<div class="a" style="left:907px;top:280px;width:89px;height:19px;background:#fff;"></div>
<div class="a" style="left:997px;top:280px;width:197px;height:19px;background:#fff;"></div>
<span class="t" style="left:909.1px;top:201px;font-size:11.5px;line-height:15px;color:#222;font-weight:700;transform:scaleX(0.932);">Property</span>
<span class="t" style="left:999.0px;top:201px;font-size:11.5px;line-height:15px;color:#222;font-weight:700;transform:scaleX(0.924);">Specified Data Type</span>
<span class="t" style="left:909.1px;top:223px;font-size:11.5px;line-height:15px;color:#444;transform:scaleX(0.896);">DataType</span>
<span class="t" style="left:999.0px;top:223px;font-size:11.5px;line-height:15px;color:#444;transform:scaleX(0.920);">fixdt(1,16,9)</span>
<span class="t" style="left:909.1px;top:243px;font-size:11.5px;line-height:15px;color:#444;transform:scaleX(0.969);">Minimum</span>
<span class="t" style="left:999.0px;top:243px;font-size:11.5px;line-height:15px;color:#444;transform:scaleX(0.986);">-64</span>
<span class="t" style="left:909.1px;top:263px;font-size:11.5px;line-height:15px;color:#444;transform:scaleX(0.949);">Maximum</span>
<span class="t" style="left:999.0px;top:263px;font-size:11.5px;line-height:15px;color:#444;transform:scaleX(0.903);">63.998046875</span>
<span class="t" style="left:909.1px;top:283px;font-size:11.5px;line-height:15px;color:#444;transform:scaleX(0.900);">Precision</span>
<span class="t" style="left:999.0px;top:283px;font-size:11.5px;line-height:15px;color:#444;transform:scaleX(0.907);">0.001953125</span>
<span class="t" style="left:905.5px;top:319px;font-size:12px;line-height:16px;color:#1a1a1a;font-weight:700;transform:scaleX(0.976);">Range Information</span>
<div class="a" style="left:906px;top:344px;width:289px;height:65px;background:#a9a9a9;"></div>
<div class="a" style="left:907px;top:345px;width:107px;height:23px;background:#f7f7f7;"></div>
<div class="a" style="left:1015px;top:345px;width:89px;height:23px;background:#f7f7f7;"></div>
<div class="a" style="left:1105px;top:345px;width:89px;height:23px;background:#f7f7f7;"></div>
<div class="a" style="left:907px;top:369px;width:107px;height:19px;background:#fff;"></div>
<div class="a" style="left:1015px;top:369px;width:89px;height:19px;background:#fff;"></div>
<div class="a" style="left:1105px;top:369px;width:89px;height:19px;background:#fff;"></div>
<div class="a" style="left:907px;top:389px;width:107px;height:19px;background:#fff;"></div>
<div class="a" style="left:1015px;top:389px;width:89px;height:19px;background:#fff;"></div>
<div class="a" style="left:1105px;top:389px;width:89px;height:19px;background:#fff;"></div>
<span class="t" style="left:909.1px;top:350px;font-size:11.5px;line-height:15px;color:#222;font-weight:700;transform:scaleX(0.932);">Property</span>
<span class="t" style="left:1016.7px;top:350px;font-size:11.5px;line-height:15px;color:#222;font-weight:700;transform:scaleX(0.973);">Minimum</span>
<span class="t" style="left:1106.5px;top:350px;font-size:11.5px;line-height:15px;color:#222;font-weight:700;transform:scaleX(0.969);">Maximum</span>
<span class="t" style="left:909.1px;top:372px;font-size:11.5px;line-height:15px;color:#444;transform:scaleX(0.937);">Simulation</span>
<span class="t" style="left:1016.7px;top:372px;font-size:11.5px;line-height:15px;color:#444;transform:scaleX(0.910);">-0.9999903395...</span>
<span class="t" style="left:1106.5px;top:372px;font-size:11.5px;line-height:15px;color:#444;transform:scaleX(0.900);">0.99999047155...</span>
<span class="t" style="left:909.1px;top:391px;font-size:11.5px;line-height:15px;color:#444;transform:scaleX(0.916);">Derived</span>
<span class="t" style="left:1016.7px;top:391px;font-size:11.5px;line-height:15px;color:#444;transform:scaleX(1.036);">-2</span>
<span class="t" style="left:1106.5px;top:391px;font-size:11.5px;line-height:15px;color:#444;">2</span>
<span class="t" style="left:905.5px;top:428px;font-size:12px;line-height:16px;color:#1a1a1a;font-weight:700;transform:scaleX(0.973);">Simulation Data Overview using fixdt(1,16,9)</span>
<div class="a" style="left:906px;top:455px;width:11.8px;height:11.8px;background:#fff;border:1px solid #8c8c8c;border-radius:1px"></div>
<span class="t" style="left:920.3px;top:454px;font-size:11.5px;line-height:15px;color:#333;transform:scaleX(0.940);">Log-scale (Y-axis)</span>
<svg style="left:900px;top:470px" width="300" height="80" viewBox="900 470 300 80"><line x1="931.5" y1="483.60" x2="1182" y2="483.60" stroke="#cfcfcf" stroke-width="0.9" stroke-dasharray="1.3,1.3"/><line x1="931.5" y1="492.98" x2="1182" y2="492.98" stroke="#cfcfcf" stroke-width="0.9" stroke-dasharray="1.3,1.3"/><line x1="931.5" y1="502.36" x2="1182" y2="502.36" stroke="#cfcfcf" stroke-width="0.9" stroke-dasharray="1.3,1.3"/><line x1="931.5" y1="511.74" x2="1182" y2="511.74" stroke="#cfcfcf" stroke-width="0.9" stroke-dasharray="1.3,1.3"/><line x1="931.5" y1="521.12" x2="1182" y2="521.12" stroke="#cfcfcf" stroke-width="0.9" stroke-dasharray="1.3,1.3"/><line x1="931.3" y1="483" x2="931.3" y2="531" stroke="#707070" stroke-width="0.8"/><line x1="931" y1="530.50" x2="1182" y2="530.50" stroke="#707070" stroke-width="0.8"/><line x1="931.3" y1="530.50" x2="931.3" y2="532.10" stroke="#8a8a8a" stroke-width="0.6"/><line x1="935.2" y1="530.50" x2="935.2" y2="532.10" stroke="#8a8a8a" stroke-width="0.6"/><line x1="939.0" y1="530.50" x2="939.0" y2="532.10" stroke="#8a8a8a" stroke-width="0.6"/><line x1="942.9" y1="530.50" x2="942.9" y2="532.10" stroke="#8a8a8a" stroke-width="0.6"/><line x1="946.8" y1="530.50" x2="946.8" y2="532.10" stroke="#8a8a8a" stroke-width="0.6"/><line x1="950.6" y1="530.50" x2="950.6" y2="532.10" stroke="#8a8a8a" stroke-width="0.6"/><line x1="954.5" y1="530.50" x2="954.5" y2="532.10" stroke="#8a8a8a" stroke-width="0.6"/><line x1="958.4" y1="530.50" x2="958.4" y2="532.10" stroke="#8a8a8a" stroke-width="0.6"/><line x1="962.3" y1="530.50" x2="962.3" y2="532.10" stroke="#8a8a8a" stroke-width="0.6"/><line x1="966.1" y1="530.50" x2="966.1" y2="532.10" stroke="#8a8a8a" stroke-width="0.6"/><line x1="970.0" y1="530.50" x2="970.0" y2="532.10" stroke="#8a8a8a" stroke-width="0.6"/><line x1="973.9" y1="530.50" x2="973.9" y2="532.10" stroke="#8a8a8a" stroke-width="0.6"/><line x1="977.7" y1="530.50" x2="977.7" y2="532.10" stroke="#8a8a8a" stroke-width="0.6"/><line x1="981.6" y1="530.50" x2="981.6" y2="532.10" stroke="#8a8a8a" stroke-width="0.6"/><line x1="985.5" y1="530.50" x2="985.5" y2="532.10" stroke="#8a8a8a" stroke-width="0.6"/><line x1="989.4" y1="530.50" x2="989.4" y2="532.10" stroke="#8a8a8a" stroke-width="0.6"/><line x1="993.2" y1="530.50" x2="993.2" y2="532.10" stroke="#8a8a8a" stroke-width="0.6"/><line x1="997.1" y1="530.50" x2="997.1" y2="532.10" stroke="#8a8a8a" stroke-width="0.6"/><line x1="1001.0" y1="530.50" x2="1001.0" y2="532.10" stroke="#8a8a8a" stroke-width="0.6"/><line x1="1004.8" y1="530.50" x2="1004.8" y2="532.10" stroke="#8a8a8a" stroke-width="0.6"/><line x1="1008.7" y1="530.50" x2="1008.7" y2="532.10" stroke="#8a8a8a" stroke-width="0.6"/><line x1="1012.6" y1="530.50" x2="1012.6" y2="532.10" stroke="#8a8a8a" stroke-width="0.6"/><line x1="1016.4" y1="530.50" x2="1016.4" y2="532.10" stroke="#8a8a8a" stroke-width="0.6"/><line x1="1020.3" y1="530.50" x2="1020.3" y2="532.10" stroke="#8a8a8a" stroke-width="0.6"/><line x1="1024.2" y1="530.50" x2="1024.2" y2="532.10" stroke="#8a8a8a" stroke-width="0.6"/><line x1="1028.0" y1="530.50" x2="1028.0" y2="532.10" stroke="#8a8a8a" stroke-width="0.6"/><line x1="1031.9" y1="530.50" x2="1031.9" y2="532.10" stroke="#8a8a8a" stroke-width="0.6"/><line x1="1035.8" y1="530.50" x2="1035.8" y2="532.10" stroke="#8a8a8a" stroke-width="0.6"/><line x1="1039.7" y1="530.50" x2="1039.7" y2="532.10" stroke="#8a8a8a" stroke-width="0.6"/><line x1="1043.5" y1="530.50" x2="1043.5" y2="532.10" stroke="#8a8a8a" stroke-width="0.6"/><line x1="1047.4" y1="530.50" x2="1047.4" y2="532.10" stroke="#8a8a8a" stroke-width="0.6"/><line x1="1051.3" y1="530.50" x2="1051.3" y2="532.10" stroke="#8a8a8a" stroke-width="0.6"/><line x1="1055.1" y1="530.50" x2="1055.1" y2="532.10" stroke="#8a8a8a" stroke-width="0.6"/><line x1="1059.0" y1="530.50" x2="1059.0" y2="532.10" stroke="#8a8a8a" stroke-width="0.6"/><line x1="1062.9" y1="530.50" x2="1062.9" y2="532.10" stroke="#8a8a8a" stroke-width="0.6"/><line x1="1066.7" y1="530.50" x2="1066.7" y2="532.10" stroke="#8a8a8a" stroke-width="0.6"/><line x1="1070.6" y1="530.50" x2="1070.6" y2="532.10" stroke="#8a8a8a" stroke-width="0.6"/><line x1="1074.5" y1="530.50" x2="1074.5" y2="532.10" stroke="#8a8a8a" stroke-width="0.6"/><line x1="1078.4" y1="530.50" x2="1078.4" y2="532.10" stroke="#8a8a8a" stroke-width="0.6"/><line x1="1082.2" y1="530.50" x2="1082.2" y2="532.10" stroke="#8a8a8a" stroke-width="0.6"/><line x1="1086.1" y1="530.50" x2="1086.1" y2="532.10" stroke="#8a8a8a" stroke-width="0.6"/><line x1="1090.0" y1="530.50" x2="1090.0" y2="532.10" stroke="#8a8a8a" stroke-width="0.6"/><line x1="1093.8" y1="530.50" x2="1093.8" y2="532.10" stroke="#8a8a8a" stroke-width="0.6"/><line x1="1097.7" y1="530.50" x2="1097.7" y2="532.10" stroke="#8a8a8a" stroke-width="0.6"/><line x1="1101.6" y1="530.50" x2="1101.6" y2="532.10" stroke="#8a8a8a" stroke-width="0.6"/><line x1="1105.4" y1="530.50" x2="1105.4" y2="532.10" stroke="#8a8a8a" stroke-width="0.6"/><line x1="1109.3" y1="530.50" x2="1109.3" y2="532.10" stroke="#8a8a8a" stroke-width="0.6"/><line x1="1113.2" y1="530.50" x2="1113.2" y2="532.10" stroke="#8a8a8a" stroke-width="0.6"/><line x1="1117.1" y1="530.50" x2="1117.1" y2="532.10" stroke="#8a8a8a" stroke-width="0.6"/><line x1="1120.9" y1="530.50" x2="1120.9" y2="532.10" stroke="#8a8a8a" stroke-width="0.6"/><line x1="1124.8" y1="530.50" x2="1124.8" y2="532.10" stroke="#8a8a8a" stroke-width="0.6"/><line x1="1128.7" y1="530.50" x2="1128.7" y2="532.10" stroke="#8a8a8a" stroke-width="0.6"/><line x1="1132.5" y1="530.50" x2="1132.5" y2="532.10" stroke="#8a8a8a" stroke-width="0.6"/><line x1="1136.4" y1="530.50" x2="1136.4" y2="532.10" stroke="#8a8a8a" stroke-width="0.6"/><line x1="1140.3" y1="530.50" x2="1140.3" y2="532.10" stroke="#8a8a8a" stroke-width="0.6"/><line x1="1144.1" y1="530.50" x2="1144.1" y2="532.10" stroke="#8a8a8a" stroke-width="0.6"/><line x1="1148.0" y1="530.50" x2="1148.0" y2="532.10" stroke="#8a8a8a" stroke-width="0.6"/><line x1="1151.9" y1="530.50" x2="1151.9" y2="532.10" stroke="#8a8a8a" stroke-width="0.6"/><line x1="1155.8" y1="530.50" x2="1155.8" y2="532.10" stroke="#8a8a8a" stroke-width="0.6"/><line x1="1159.6" y1="530.50" x2="1159.6" y2="532.10" stroke="#8a8a8a" stroke-width="0.6"/><line x1="1163.5" y1="530.50" x2="1163.5" y2="532.10" stroke="#8a8a8a" stroke-width="0.6"/><line x1="1167.4" y1="530.50" x2="1167.4" y2="532.10" stroke="#8a8a8a" stroke-width="0.6"/><line x1="1171.2" y1="530.50" x2="1171.2" y2="532.10" stroke="#8a8a8a" stroke-width="0.6"/><line x1="1175.1" y1="530.50" x2="1175.1" y2="532.10" stroke="#8a8a8a" stroke-width="0.6"/><line x1="1179.0" y1="530.50" x2="1179.0" y2="532.10" stroke="#8a8a8a" stroke-width="0.6"/><line x1="1182.8" y1="530.50" x2="1182.8" y2="532.10" stroke="#8a8a8a" stroke-width="0.6"/><text x="927.6" y="485.10" font-size="4.3" fill="#6a6a6a" text-anchor="end" font-family="Liberation Sans">10.00</text><line x1="929.3" y1="483.60" x2="931.3" y2="483.60" stroke="#707070" stroke-width="0.6"/><text x="927.6" y="494.48" font-size="4.3" fill="#6a6a6a" text-anchor="end" font-family="Liberation Sans">8.00</text><line x1="929.3" y1="492.98" x2="931.3" y2="492.98" stroke="#707070" stroke-width="0.6"/><text x="927.6" y="503.86" font-size="4.3" fill="#6a6a6a" text-anchor="end" font-family="Liberation Sans">6.00</text><line x1="929.3" y1="502.36" x2="931.3" y2="502.36" stroke="#707070" stroke-width="0.6"/><text x="927.6" y="513.24" font-size="4.3" fill="#6a6a6a" text-anchor="end" font-family="Liberation Sans">4.00</text><line x1="929.3" y1="511.74" x2="931.3" y2="511.74" stroke="#707070" stroke-width="0.6"/><text x="927.6" y="522.62" font-size="4.3" fill="#6a6a6a" text-anchor="end" font-family="Liberation Sans">2.00</text><line x1="929.3" y1="521.12" x2="931.3" y2="521.12" stroke="#707070" stroke-width="0.6"/><text x="927.6" y="532.00" font-size="4.3" fill="#6a6a6a" text-anchor="end" font-family="Liberation Sans">0.00</text><line x1="929.3" y1="530.50" x2="931.3" y2="530.50" stroke="#707070" stroke-width="0.6"/><rect x="934.75" y="494.9" width="2.5" height="35.60" fill="#2b87e0"/><rect x="938.65" y="515.5" width="2.5" height="15.00" fill="#2b87e0"/><rect x="942.55" y="497" width="2.5" height="33.50" fill="#2b87e0"/><rect x="946.45" y="519.2" width="2.5" height="11.30" fill="#2b87e0"/><rect x="950.25" y="525.1" width="2.5" height="5.40" fill="#2b87e0"/><rect x="954.05" y="528" width="2.5" height="2.50" fill="#2b87e0"/><rect x="957.95" y="529.3" width="2.5" height="1.20" fill="#2b87e0"/><rect x="961.75" y="530" width="2.5" height="0.50" fill="#2b87e0"/><rect x="1112.75" y="518.9" width="2.5" height="11.60" fill="#f0ad1c"/><rect x="1116.65" y="485.1" width="2.5" height="45.40" fill="#f0ad1c"/><rect x="1120.50" y="493.9" width="2.5" height="36.60" fill="#f0ad1c"/><rect x="1124.35" y="512.6" width="2.5" height="17.90" fill="#f0ad1c"/><rect x="1128.25" y="522" width="2.5" height="8.50" fill="#f0ad1c"/><rect x="1132.15" y="526.6" width="2.5" height="3.90" fill="#f0ad1c"/><rect x="1136.00" y="528.5" width="2.5" height="2.00" fill="#f0ad1c"/><rect x="1139.75" y="529.8" width="2.5" height="0.70" fill="#f0ad1c"/><text x="940.3" y="537.2" font-size="4" fill="#808080" text-anchor="middle" font-family="Liberation Sans">2<tspan dy="-1.5" font-size="2.8">-2</tspan></text><text x="967.3" y="537.2" font-size="4" fill="#808080" text-anchor="middle" font-family="Liberation Sans">2<tspan dy="-1.5" font-size="2.8">-8</tspan></text><text x="994.4" y="537.2" font-size="4" fill="#808080" text-anchor="middle" font-family="Liberation Sans">2<tspan dy="-1.5" font-size="2.8">-15</tspan></text><text x="1021.4" y="537.2" font-size="4" fill="#808080" text-anchor="middle" font-family="Liberation Sans">2<tspan dy="-1.5" font-size="2.8">-21</tspan></text><text x="1048.5" y="537.2" font-size="4" fill="#808080" text-anchor="middle" font-family="Liberation Sans">2<tspan dy="-1.5" font-size="2.8">-28</tspan></text><text x="1075.5" y="537.2" font-size="4" fill="#808080" text-anchor="middle" font-family="Liberation Sans">2<tspan dy="-1.5" font-size="2.8">-34</tspan></text><text x="1102.6" y="537.2" font-size="4" fill="#808080" text-anchor="middle" font-family="Liberation Sans">2<tspan dy="-1.5" font-size="2.8">-41</tspan></text><text x="1129.6" y="537.2" font-size="4" fill="#808080" text-anchor="middle" font-family="Liberation Sans">2<tspan dy="-1.5" font-size="2.8">-47</tspan></text><text x="1156.7" y="537.2" font-size="4" fill="#808080" text-anchor="middle" font-family="Liberation Sans">2<tspan dy="-1.5" font-size="2.8">-54</tspan></text><text x="1059" y="543.2" font-size="5.2" fill="#666" text-anchor="middle" font-family="Liberation Sans">Simulation Data Values</text><text transform="translate(910.8,507) rotate(-90)" font-size="5.2" fill="#666" text-anchor="middle" font-family="Liberation Sans">% Occurrences</text></svg>
<span class="t" style="left:920.0px;top:550px;font-size:12px;line-height:16px;color:#1e1e1e;font-weight:700;transform:scaleX(0.983);">Values</span>
<span class="t" style="left:980.5px;top:550px;font-size:12px;line-height:16px;color:#1e1e1e;font-weight:700;transform:scaleX(0.975);">Potential</span>
<span class="t" style="left:977.0px;top:565px;font-size:12px;line-height:16px;color:#1e1e1e;font-weight:700;transform:scaleX(0.972);">Overflows</span>
<span class="t" style="left:1047.0px;top:550px;font-size:12px;line-height:16px;color:#1e1e1e;font-weight:700;transform:scaleX(0.962);">In-Range</span>
<span class="t" style="left:1113.5px;top:550px;font-size:12px;line-height:16px;color:#1e1e1e;font-weight:700;transform:scaleX(0.975);">Potential</span>
<span class="t" style="left:1106.5px;top:565px;font-size:12px;line-height:16px;color:#1e1e1e;font-weight:700;transform:scaleX(0.970);">Underflows</span>
<div class="a" style="left:971.2px;top:550.5px;width:1px;height:72px;background:#9a9a9a;"></div>
<div class="a" style="left:905.5px;top:579.2px;width:265.5px;height:1px;background:#8a8a8a;"></div>
<span class="t" style="left:918.2px;top:579px;font-size:12px;line-height:16px;color:#333;transform:scaleX(0.973);">Positive</span>
<span class="t" style="left:915.2px;top:593px;font-size:12px;line-height:16px;color:#333;transform:scaleX(0.975);">Negative</span>
<span class="t" style="left:926.2px;top:608px;font-size:12px;line-height:16px;color:#333;">Zero</span>
<span class="t" style="left:1007.5px;top:579px;font-size:12px;line-height:16px;color:#333;">0</span>
<span class="t" style="left:1007.5px;top:593px;font-size:12px;line-height:16px;color:#333;">0</span>
<span class="t" style="left:1007.5px;top:608px;font-size:12px;line-height:16px;color:#333;">0</span>
<span class="t" style="left:1064.5px;top:579px;font-size:12px;line-height:16px;color:#333;transform:scaleX(0.989);">2483</span>
<span class="t" style="left:1064.5px;top:593px;font-size:12px;line-height:16px;color:#333;transform:scaleX(0.989);">2482</span>
<span class="t" style="left:1071.5px;top:608px;font-size:12px;line-height:16px;color:#333;transform:scaleX(0.943);">66</span>
<span class="t" style="left:1130.5px;top:579px;font-size:12px;line-height:16px;color:#333;">2987</span>
<span class="t" style="left:1130.5px;top:593px;font-size:12px;line-height:16px;color:#333;">2993</span>
<span class="t" style="left:1140.0px;top:608px;font-size:12px;line-height:16px;color:#333;">0</span>
<div class="a" style="left:996px;top:582.7px;width:8.8px;height:8.8px;background:#b5302a;"></div>
<div class="a" style="left:1052.4px;top:582.7px;width:8.8px;height:8.8px;background:#2b84d8;"></div>
<div class="a" style="left:1119px;top:582.7px;width:8.8px;height:8.8px;background:#eeac1f;"></div>
<svg style="left:996px;top:596.9px" width="9" height="9" viewBox="0 0 9 9"><g stroke="#c25a4c" stroke-width="1.25"><line x1="0" y1="3.2" x2="3.2" y2="0"/><line x1="0" y1="6.4" x2="6.4" y2="0"/><line x1="0.6" y1="9" x2="9" y2="0.6"/><line x1="3.8" y1="9" x2="9" y2="3.8"/><line x1="7" y1="9" x2="9" y2="7"/></g></svg>
<svg style="left:1052.4px;top:596.9px" width="9" height="9" viewBox="0 0 9 9"><g stroke="#4a98e0" stroke-width="1.25"><line x1="0" y1="3.2" x2="3.2" y2="0"/><line x1="0" y1="6.4" x2="6.4" y2="0"/><line x1="0.6" y1="9" x2="9" y2="0.6"/><line x1="3.8" y1="9" x2="9" y2="3.8"/><line x1="7" y1="9" x2="9" y2="7"/></g></svg>
<svg style="left:1119px;top:596.9px" width="9" height="9" viewBox="0 0 9 9"><g stroke="#f0b94a" stroke-width="1.25"><line x1="0" y1="3.2" x2="3.2" y2="0"/><line x1="0" y1="6.4" x2="6.4" y2="0"/><line x1="0.6" y1="9" x2="9" y2="0.6"/><line x1="3.8" y1="9" x2="9" y2="3.8"/><line x1="7" y1="9" x2="9" y2="7"/></g></svg>
<svg style="left:19px;top:35px" width="22" height="21" viewBox="0 0 22 21"><defs><linearGradient id="gp" x1="0" y1="0" x2="0" y2="1"><stop offset="0" stop-color="#fbfdf6"/><stop offset="0.36" stop-color="#e6f4cb"/><stop offset="0.44" stop-color="#bce375"/><stop offset="0.62" stop-color="#b0de62"/><stop offset="1" stop-color="#8fc93b"/></linearGradient></defs><path d="M7.6 1 H14 V7 H20.4 V13.6 H14 V20 H7.6 V13.6 H1 V7 H7.6 Z" fill="none" stroke="#fff" stroke-width="3" stroke-linejoin="round" opacity="0.9"/><path d="M7.6 1 H14 V7 H20.4 V13.6 H14 V20 H7.6 V13.6 H1 V7 H7.6 Z" fill="url(#gp)" stroke="#62a226" stroke-width="1.1" stroke-linejoin="round"/></svg>
<svg style="left:74px;top:34px;opacity:0.38" width="24" height="23" viewBox="0 0 24 23"><path d="M5 2.5 H15 L18.5 6 V20 H5 Z" fill="#f4f4f4" stroke="#9a9a9a" stroke-width="0.9"/><path d="M8 9.5 H16 M8 12.5 H16 M8 15.5 H13" stroke="#a8a8a8" stroke-width="0.9"/><path d="M2 7.5 A4.6 4.6 0 0 1 10 4.5" fill="none" stroke="#4a8ac6" stroke-width="2"/><polygon points="10.8,1.8 11.4,6.6 7.4,5.4" fill="#4a8ac6"/><path d="M10.5 9.5 A4.6 4.6 0 0 1 2.6 12" fill="none" stroke="#4a8ac6" stroke-width="2"/><polygon points="1.4,14.8 1,10 5,11.2" fill="#4a8ac6"/><path d="M12.5 20.5 L21.5 11.5 L23.3 13.3 L14.3 22.3 L11.8 22.9 Z" fill="#f2c14e" stroke="#b98d2b" stroke-width="0.7"/></svg>
<svg style="left:129px;top:35px;opacity:0.42" width="30" height="21" viewBox="0 0 30 21"><g fill="none" stroke="#7a7a7a" stroke-width="1"><path d="M4.5 2 H2.5 V7 H4.5 M7.5 2 H9.5 V7 H7.5 M4.8 4.5 H7.2"/><path d="M4.5 13 H2.5 V18 H4.5 M7.5 13 H9.5 V18 H7.5 M4.8 15.5 H7.2"/><path d="M6 8.5 V11.5"/></g><circle cx="17" cy="10" r="5.3" fill="#fff" stroke="#e08a5a" stroke-width="1.2"/><path d="M14.3 10 H19.7 M17 7.3 V12.7" stroke="#666" stroke-width="1.2"/></svg>
<svg style="left:186px;top:33px" width="26" height="26" viewBox="0 0 26 26"><rect x="2" y="2" width="18.2" height="18.2" fill="#fdfdfd" stroke="#666" stroke-width="1.1"/><path d="M2.60 16.35 L4.64 16.35 L4.64 13.36 L7.70 13.36 L7.70 10.50 L10.76 10.50 L10.76 7.64 L14.16 7.64 L14.16 5.04 L19.60 5.04" fill="none" stroke="#2f7fc9" stroke-width="1.2" stroke-linejoin="round"/><g transform="translate(17.3,16.7) scale(1.18)"><path d="M-1.2 -6.4 H1.2 L1.7 -4.7 L3.3 -5.5 L5 -3.8 L4.1 -2.3 L5.9 -1.8 V0.6 L4.2 1.2 L5 2.8 L3.3 4.5 L1.8 3.7 L1.2 5.4 H-1.2 L-1.8 3.7 L-3.3 4.5 L-5 2.8 L-4.2 1.2 L-5.9 0.6 V-1.8 L-4.1 -2.3 L-5 -3.8 L-3.3 -5.5 L-1.7 -4.7 Z" transform="translate(0,0.5)" fill="#505050"/><circle cx="0" cy="0" r="4.1" fill="#5a5a5a"/><circle cx="0" cy="0" r="3.2" fill="#d9d9d9"/><circle cx="0" cy="0" r="2" fill="#6a6a6a"/><circle cx="0" cy="0" r="1.1" fill="#f0f0f0"/></g></svg>
<svg style="left:242px;top:33px" width="26" height="25" viewBox="0 0 26 25"><rect x="6.3" y="2" width="16.3" height="16.3" rx="2.2" fill="#fdfdfd" stroke="#6e6e6e" stroke-width="1.3"/><circle cx="12.8" cy="8.3" r="4" fill="#3d3d3d"/><circle cx="12.8" cy="8.3" r="2" fill="#777"/><path d="M12.6 7.6 L14 4.2" stroke="#e0341c" stroke-width="2.6" stroke-linecap="round"/><path d="M9.5 15.5 H13 V13 H16 V10.8 H21.5" fill="none" stroke="#2f7fc9" stroke-width="1.1"/><path d="M16.5 9.3 H21.5" stroke="#e07b5a" stroke-width="0.9"/><rect x="17.6" y="12.3" width="1.4" height="4" fill="#333"/><rect x="20" y="11.3" width="1.4" height="5" fill="#333"/><polygon points="1.2,12.3 1.2,22.8 10.2,17.5" fill="#5db52c" stroke="#3f8f1e" stroke-width="1" stroke-linejoin="round"/><polygon points="2.8,15 2.8,20 7.2,17.5" fill="#a9e07a" opacity="0.85"/></svg>
<svg style="left:304px;top:33px;opacity:0.42" width="26" height="25" viewBox="0 0 26 25"><rect x="2" y="2" width="18" height="18.4" fill="#fdfdfd" stroke="#8a8a8a" stroke-width="1"/><path d="M2.60 16.35 L4.58 16.35 L4.58 13.36 L7.55 13.36 L7.55 10.50 L10.52 10.50 L10.52 7.64 L13.82 7.64 L13.82 5.04 L19.10 5.04" fill="none" stroke="#5e9dd6" stroke-width="1.2" stroke-linejoin="round"/><path d="M9.5 16 L13.8 20.2 L22.3 11.5" fill="none" stroke="#7cbc45" stroke-width="2.3" stroke-linecap="round" stroke-linejoin="round"/></svg>
<svg style="left:390px;top:33px" width="26" height="25" viewBox="0 0 26 25"><defs><linearGradient id="sg" x1="0" y1="0" x2="0" y2="1"><stop offset="0" stop-color="#f2f6ec"/><stop offset="0.45" stop-color="#dbeec4"/><stop offset="1" stop-color="#cfe9b0"/></linearGradient></defs><circle cx="12" cy="11.2" r="9.9" fill="url(#sg)" stroke="#d0d0d0" stroke-width="1"/><polygon points="9.6,7 9.6,15.6 16.3,11.2" fill="#a3a3a3"/><rect x="15.2" y="14.4" width="8.4" height="8.2" fill="#fbfbfb" stroke="#b9b9b9" stroke-width="1"/><path d="M16.8 20.8 H18.5 V18.8 H20.4 V17 H22.2" fill="none" stroke="#9cc6ea" stroke-width="1.1"/></svg>
<svg style="left:606px;top:34px" width="24" height="23" viewBox="0 0 24 23"><defs><linearGradient id="cg" x1="0" y1="0" x2="0" y2="1"><stop offset="0" stop-color="#fff"/><stop offset="1" stop-color="#ececec"/></linearGradient></defs><rect x="1.8" y="1.6" width="19.8" height="19.6" fill="url(#cg)" stroke="#d3d3d3" stroke-width="1.1"/><path d="M2.5 13 C5 13 6 5.5 9.5 5.5 S14 15 17 15 S20 12 21 11" fill="none" stroke="#c3dbf0" stroke-width="1.1"/><path d="M2.5 11 C4 15 6 15.5 8.5 14 S12 6 15 6 S19 9 21 13" fill="none" stroke="#f0cdc3" stroke-width="1.1"/></svg>
<svg style="left:670px;top:28px" width="40" height="34" viewBox="670 28 40 34"><defs><linearGradient id="rg" x1="0" y1="0" x2="0.6" y2="1"><stop offset="0" stop-color="#cfe6f7"/><stop offset="0.45" stop-color="#8fc1e8"/><stop offset="1" stop-color="#4a8fcb"/></linearGradient></defs><path d="M684.2 37 A10 10 0 1 1 683.3 51.2 L686.7 48.1 A5.4 5.4 0 1 0 687.3 40.5 L689 42.2 L679.1 45.1 L682.2 34.65 Z" fill="url(#rg)" stroke="#2d6197" stroke-width="1.1" stroke-linejoin="round"/></svg>
<svg style="left:736px;top:31.299999999999997px" width="18" height="18" viewBox="0 0 18 18"><circle cx="7" cy="6.8" r="5" fill="none" stroke="#3f3f3f" stroke-width="1.05"/><path d="M10.7 10.5 L15 14.8" stroke="#3f3f3f" stroke-width="1.45" stroke-linecap="round"/><path d="M4.4 6.8 H9.6 M7 4.2 V9.4" stroke="#3f3f3f" stroke-width="1.05"/></svg>
<svg style="left:736px;top:52.1px" width="18" height="18" viewBox="0 0 18 18"><circle cx="7" cy="6.8" r="5" fill="none" stroke="#bdbdbd" stroke-width="1.05"/><path d="M10.7 10.5 L15 14.8" stroke="#bdbdbd" stroke-width="1.45" stroke-linecap="round"/><path d="M4.4 6.8 H9.6" stroke="#bdbdbd" stroke-width="1.1"/></svg>
<svg style="left:736px;top:74.4px" width="18" height="18" viewBox="0 0 18 18"><circle cx="7" cy="6.8" r="5" fill="none" stroke="#3f3f3f" stroke-width="1.05"/><path d="M10.7 10.5 L15 14.8" stroke="#3f3f3f" stroke-width="1.45" stroke-linecap="round"/><path d="M4.2 5.6 V4.2 H5.6 M8.4 4.2 H9.8 V5.6 M9.8 8 V9.4 H8.4 M5.6 9.4 H4.2 V8" fill="none" stroke="#3f3f3f" stroke-width="1"/></svg>
<svg style="left:21px;top:132px" width="17" height="16" viewBox="0 0 17 16"><rect x="1.2" y="1.2" width="13.2" height="12.8" fill="#fdfdfd" stroke="#444" stroke-width="1.1"/><path d="M1.80 10.95 L3.24 10.95 L3.24 8.88 L5.40 8.88 L5.40 6.90 L7.56 6.90 L7.56 4.92 L9.96 4.92 L9.96 3.12 L13.80 3.12" fill="none" stroke="#2f7fc9" stroke-width="1.1" stroke-linejoin="round"/><g transform="translate(11.4,11) scale(0.78)"><path d="M-1.2 -6.4 H1.2 L1.7 -4.7 L3.3 -5.5 L5 -3.8 L4.1 -2.3 L5.9 -1.8 V0.6 L4.2 1.2 L5 2.8 L3.3 4.5 L1.8 3.7 L1.2 5.4 H-1.2 L-1.8 3.7 L-3.3 4.5 L-5 2.8 L-4.2 1.2 L-5.9 0.6 V-1.8 L-4.1 -2.3 L-5 -3.8 L-3.3 -5.5 L-1.7 -4.7 Z" transform="translate(0,0.5)" fill="#505050"/><circle cx="0" cy="0" r="4.1" fill="#5a5a5a"/><circle cx="0" cy="0" r="3.2" fill="#d9d9d9"/><circle cx="0" cy="0" r="2" fill="#6a6a6a"/><circle cx="0" cy="0" r="1.1" fill="#f0f0f0"/></g></svg>
<svg style="left:21px;top:152px" width="17" height="16" viewBox="0 0 17 16"><path d="M4.2 2.2 H10.4 L13 4.8 V14 H4.2 Z" fill="#eceef0" stroke="#9a9a9a" stroke-width="0.8"/><path d="M6.5 9 H11.2 M6.5 11 H10" stroke="#a5a5a5" stroke-width="0.8"/><rect x="0.8" y="1.2" width="7.4" height="8" rx="2.2" fill="#4a8fd0"/><path d="M2.6 4.4 A2.3 2.3 0 0 1 6.4 3.6 M6.5 6.2 A2.3 2.3 0 0 1 2.6 7" fill="none" stroke="#e8f2fb" stroke-width="1"/><polygon points="7.2,2.2 7.2,4.8 5,4.2" fill="#e8f2fb"/><polygon points="1.8,8.4 1.8,5.8 4,6.4" fill="#e8f2fb"/><path d="M8.2 14.6 L13.4 9.4 L14.8 10.8 L9.6 16 L7.8 16.4 Z" fill="#f0b84e" stroke="#b0802a" stroke-width="0.5"/><circle cx="14.6" cy="9.4" r="1.25" fill="#e8564a"/></svg>
<svg style="left:21px;top:172px" width="18" height="14" viewBox="0 0 18 14"><g fill="none" stroke="#707070" stroke-width="1.1"><path d="M1.7 1 V5.6 M6.8 1 V5.6 M1.7 3.1 H6.8"/><path d="M1.7 8.2 V12.8 M6.8 8.2 V12.8 M1.7 10.4 H6.8"/></g><defs><radialGradient id="gc" cx="0.45" cy="0.3" r="0.75"><stop offset="0" stop-color="#c6ef8f"/><stop offset="0.55" stop-color="#7cc832"/><stop offset="1" stop-color="#4c9f1c"/></radialGradient></defs><circle cx="11.5" cy="7" r="4.4" fill="url(#gc)"/><polygon points="10,4.6 10,9 13.1,6.8" fill="#0a0a0a"/></svg>
<svg style="left:16px;top:450px" width="16" height="16" viewBox="0 0 16 16"><polygon points="1.2,1.2 1.2,8.6 8.6,4.9" fill="#1f7fd1" stroke="#16609f" stroke-width="0.6"/><path d="M8.6 4.9 H11.4 V9" fill="none" stroke="#333" stroke-width="0.9"/><rect x="8.2" y="8.8" width="6.4" height="6.4" fill="#c9301c" stroke="#8f1f10" stroke-width="0.6"/><rect x="10.2" y="10.8" width="2.4" height="2.4" fill="#f39a3a"/></svg>
<svg style="left:31.5px;top:470px" width="13" height="13" viewBox="0 0 13 13"><rect x="0.6" y="0.6" width="11.6" height="11.6" fill="#f5d983" stroke="#7d9fc6" stroke-width="1"/><rect x="1.4" y="1.4" width="4.6" height="4.6" fill="#fff"/><path d="M6.4 0.6 V12.2 M0.6 6.4 H12.2" stroke="#c9d8e8" stroke-width="1.1"/></svg>
<svg style="left:31.5px;top:489.8px" width="16" height="16" viewBox="0 0 16 16"><defs><linearGradient id="mg" x1="0" y1="0" x2="1" y2="1"><stop offset="0" stop-color="#fff"/><stop offset="1" stop-color="#d5d5d5"/></linearGradient></defs><rect x="0.8" y="0.8" width="13.8" height="13.6" fill="url(#mg)" stroke="#505050" stroke-width="1.1"/><polygon points="3.3,2.6 3.3,8.8 9,5.7" fill="#1f7fd1"/><path d="M9 5.7 H10.8 V8.5" fill="none" stroke="#333" stroke-width="0.8"/><rect x="8.4" y="8.2" width="4.8" height="4.8" fill="#c9301c"/><rect x="9.9" y="9.7" width="1.8" height="1.8" fill="#f39a3a"/></svg>
<svg style="left:48px;top:510px" width="16" height="15" viewBox="0 0 16 15"><defs><linearGradient id="eg" x1="0" y1="0" x2="1" y2="1"><stop offset="0" stop-color="#fff"/><stop offset="1" stop-color="#d8d8d8"/></linearGradient></defs><rect x="0.8" y="0.8" width="13.6" height="13" fill="url(#eg)" stroke="#4a4a4a" stroke-width="1.1"/><polygon points="3,2.8 3,7.6 7.6,5.2" fill="#fff" stroke="#444" stroke-width="0.9"/><path d="M7.6 5.2 H9.8 V8" fill="none" stroke="#444" stroke-width="0.8"/><rect x="7.9" y="8" width="3.8" height="3.8" fill="#fff" stroke="#444" stroke-width="0.9"/></svg>
<div class="a" style="left:0px;top:107.1px;width:1200px;height:1.7px;background:#c1c1c1;"></div>
</div>
</body>
</html>
